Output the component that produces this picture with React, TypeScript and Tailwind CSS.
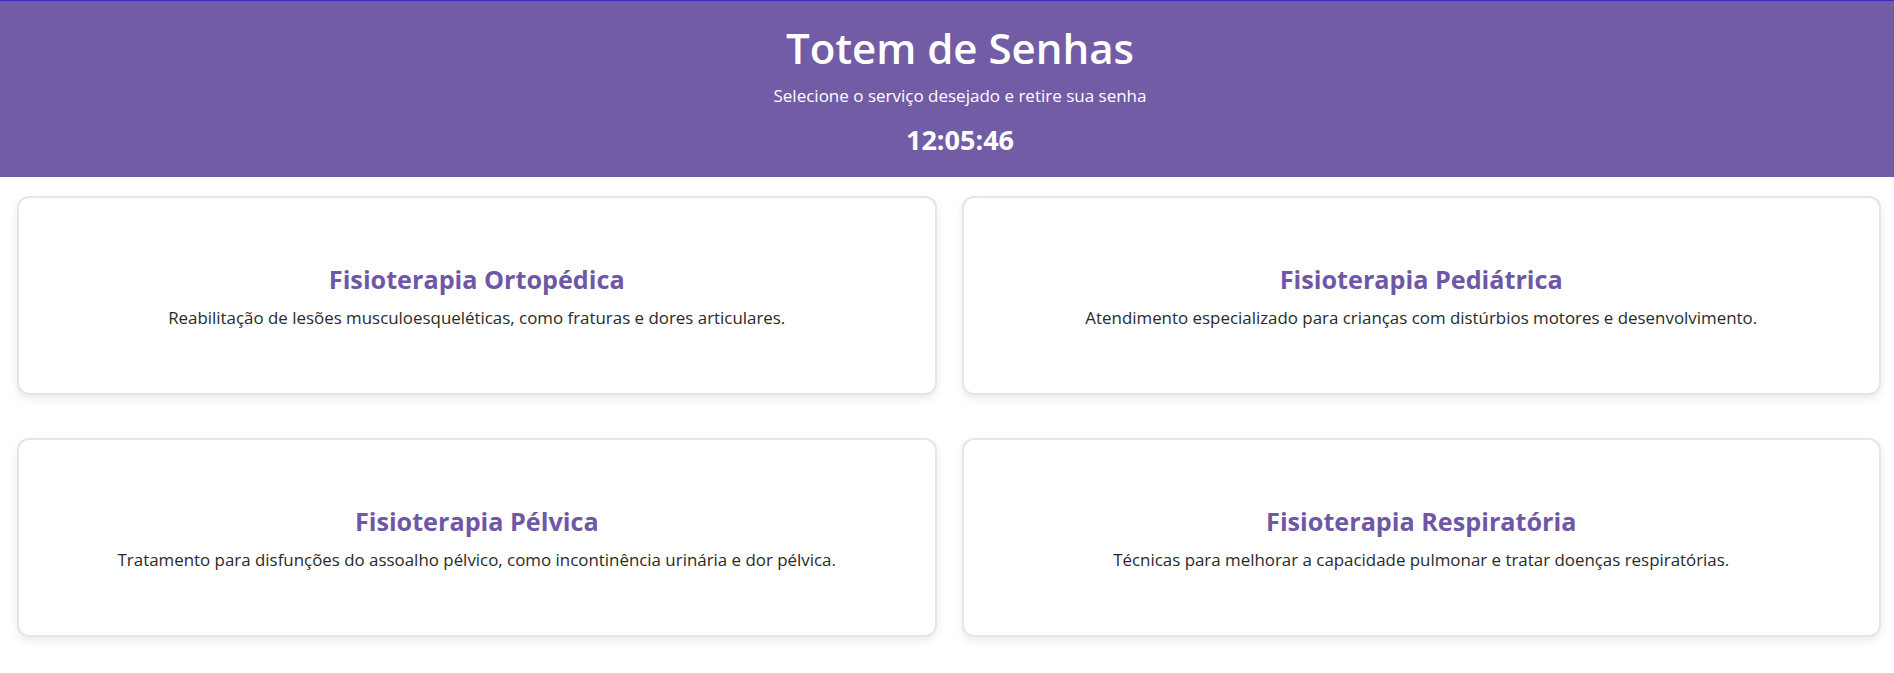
import React, { useEffect, useState } from 'react';

interface Service {
  title: string;
  description: string;
}

const services: Service[] = [
  {
    title: 'Fisioterapia Ortopédica',
    description: 'Reabilitação de lesões musculoesqueléticas, como fraturas e dores articulares.',
  },
  {
    title: 'Fisioterapia Pediátrica',
    description: 'Atendimento especializado para crianças com distúrbios motores e desenvolvimento.',
  },
  {
    title: 'Fisioterapia Pélvica',
    description: 'Tratamento para disfunções do assoalho pélvico, como incontinência urinária e dor pélvica.',
  },
  {
    title: 'Fisioterapia Respiratória',
    description: 'Técnicas para melhorar a capacidade pulmonar e tratar doenças respiratórias.',
  },
];

const ServiceCard: React.FC<{ service: Service }> = ({ service }) => (
  <button className="h-[199px] bg-white border-2 border-[#e3e6ea] rounded-[12px] shadow-[0_4px_8px_rgba(0,0,0,0.08)] flex flex-col items-center justify-center text-center px-6 cursor-pointer">
    <h2 className="text-[25.2px] leading-[32px] font-bold text-[#7057a6]">{service.title}</h2>
    <p className="mt-[12px] text-[16.9px] leading-[22px] text-[#2a2a2a]">{service.description}</p>
  </button>
);

export default function App() {
  const [time] = useState('12:05:46');

  useEffect(() => {
    // relógio fixo para o print
  }, []);

  return (
    <div className="min-h-[673px] bg-white font-['Open_Sans',sans-serif]">
      <header className="h-[177px] bg-[#725ca6] border-t border-[#3a2db8] pl-[26px] flex flex-col items-center text-white">
        <h1 className="mt-[19px] text-[42px] leading-[56px] font-semibold">Totem de Senhas</h1>
        <p className="mt-[8px] text-[17px] leading-[24px]">Selecione o serviço desejado e retire sua senha</p>
        <div className="mt-[16px] text-[27px] leading-[32px] font-bold">{time}</div>
      </header>

      <main className="grid grid-cols-2 gap-x-[25px] gap-y-[43px] pl-[17px] pr-[13px] pt-[19px]">
        {services.map((s) => (
          <ServiceCard key={s.title} service={s} />
        ))}
      </main>
    </div>
  );
}
